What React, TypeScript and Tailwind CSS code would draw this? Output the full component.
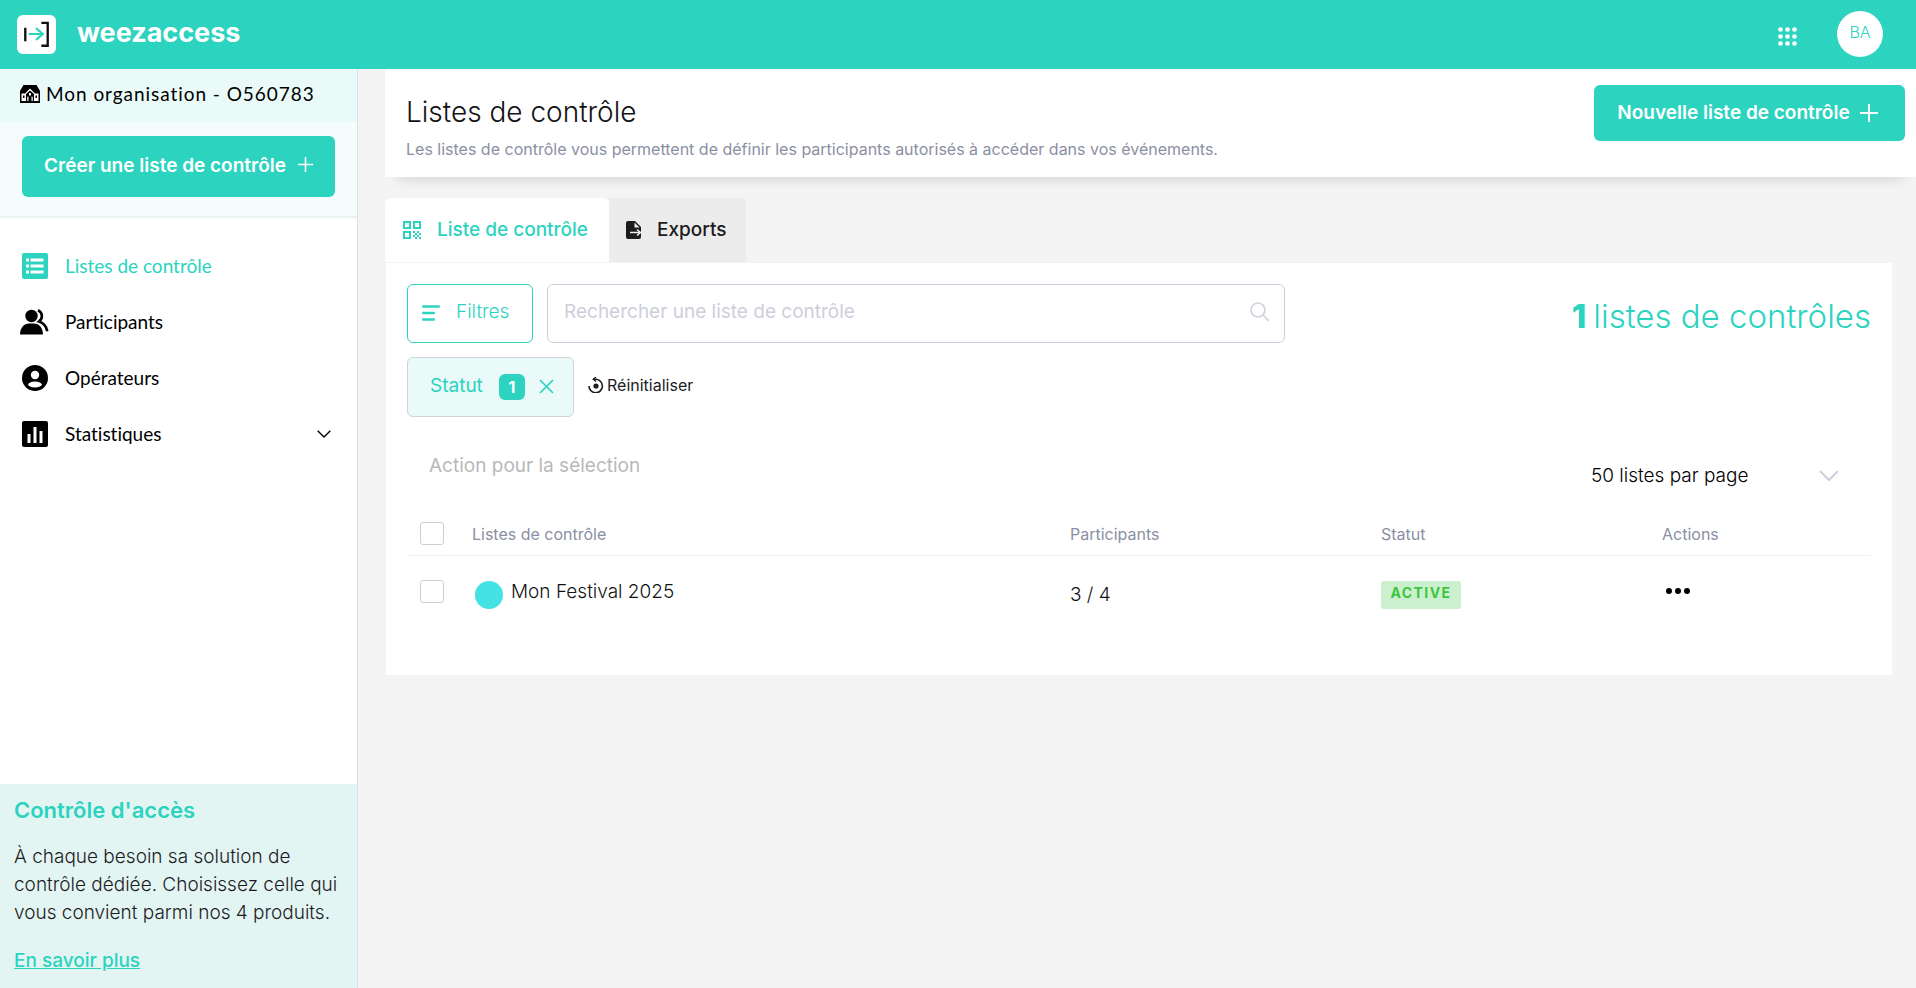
import { type ReactNode, useState } from "react";

type IconProps = { className?: string };

function LogoIcon({ className }: IconProps) {
  return (
    <svg viewBox="0 0 40 40" className={className} fill="none" aria-hidden="true">
      <path d="M8.500 13v14M25 8h6.500v23.500H25" stroke="#111" strokeWidth="2.400" />
      <path d="M12 19.500h14.500M19.500 13.500l7 6-7 6" stroke="#2cd3bf" strokeWidth="2.200" />
    </svg>
  );
}

function HomeIcon({ className }: IconProps) {
  return (
    <svg viewBox="0 0 20 18" className={className} aria-hidden="true">
      <path d="M3.500 0h13L20 6V18H0V6z" fill="#000" />
      <path d="M1.500 8.500H5L10 3.500l5 5h3.500v7.500H1.500z" fill="#fff" />
      <path d="M6 16V9l4-3.500L14 9v7h-1.500v-4h-5v4z" fill="#000" />
      <path d="M3 10.500h1.500V13H3zM15.500 10.500H17V13h-1.500z" fill="#000" />
      <path d="M9 8h2v2.500H9zM7.500 11.500h1V16h-1zM11.500 11.500h1V16h-1z" fill="#fff" />
      <path d="M8.500 12h3v5h-3z" fill="#000" />
    </svg>
  );
}

function ListIcon({ className }: IconProps) {
  return (
    <svg viewBox="0 0 26 26" className={className} aria-hidden="true">
      <rect width="26" height="26" rx="2" fill="currentColor" />
      <path
        d="M4 5.500h3v3H4zM8.500 5.500h13v3h-13zM4 11.500h3v3H4zM8.500 11.500h13v3h-13zM4 17.500h3v3H4zM8.500 17.500h13v3h-13z"
        fill="#fff"
      />
    </svg>
  );
}

function PeopleIcon({ className }: IconProps) {
  return (
    <svg viewBox="0 0 29 26" className={className} aria-hidden="true">
      <circle cx="11.500" cy="7" r="6.200" fill="currentColor" />
      <path d="M0 25.500c0-6.500 4-11 9-11h5c5 0 9 4.500 9 11z" fill="currentColor" />
      <path
        d="M18 1.200c5 2.300 5 8.300 1 11.300 4.500 1.500 7.500 5 8.300 9.800"
        fill="none"
        stroke="currentColor"
        strokeWidth="2.600"
      />
    </svg>
  );
}

function AccountIcon({ className }: IconProps) {
  return (
    <svg viewBox="0 0 26 26" className={className} aria-hidden="true">
      <circle cx="13" cy="13" r="13" fill="currentColor" />
      <circle cx="13" cy="10" r="4.200" fill="#fff" />
      <ellipse cx="13" cy="19.500" rx="6.800" ry="3" fill="#fff" />
    </svg>
  );
}

function StatsIcon({ className }: IconProps) {
  return (
    <svg viewBox="0 0 26 26" className={className} aria-hidden="true">
      <rect width="26" height="26" rx="2" fill="currentColor" />
      <path d="M5.500 13h3v9h-3zM11.500 6h3v16h-3zM17.500 10h3v12h-3z" fill="#fff" />
    </svg>
  );
}

function QrIcon({ className }: IconProps) {
  return (
    <svg viewBox="0 0 18 18" className={className} aria-hidden="true">
      <path
        d="M1 1h6v6H1zM11 1h6v6h-6zM1 11h6v6H1z"
        fill="none"
        stroke="currentColor"
        strokeWidth="2"
      />
      <path
        d="M10 10h2v2h-2zM14 10h2v2h-2zM12 12h2v2h-2zM16 12h2v2h-2zM10 14h2v2h-2zM14 14h2v2h-2zM12 16h2v2h-2zM16 16h2v2h-2z"
        fill="currentColor"
      />
    </svg>
  );
}

function ExportIcon({ className }: IconProps) {
  return (
    <svg viewBox="0 0 15 18" className={className} aria-hidden="true">
      <path
        d="M2 0h7l6 6v10a2 2 0 0 1-2 2H2a2 2 0 0 1-2-2V2a2 2 0 0 1 2-2z"
        fill="#1c1c1e"
      />
      <path d="M8.500 1.500v5h5z" fill="#ededed" />
      <path d="M4 11.500h10M11 8.500l3.500 3-3.500 3" fill="none" stroke="#ededed" strokeWidth="1.500" />
    </svg>
  );
}

function PlusIcon({ className }: IconProps) {
  return (
    <svg viewBox="0 0 16 16" className={className} aria-hidden="true">
      <path d="M8 0v16M0 8h16" stroke="currentColor" strokeWidth="1.700" />
    </svg>
  );
}

function FilterIcon({ className }: IconProps) {
  return (
    <svg viewBox="0 0 18 16" className={className} aria-hidden="true">
      <path
        d="M1.200 1.500h15.600M1.200 8h10.600M1.200 14.500h10.600"
        stroke="currentColor"
        strokeWidth="2.400"
        strokeLinecap="round"
      />
    </svg>
  );
}

function ResetIcon({ className }: IconProps) {
  return (
    <svg viewBox="0 0 16 16" className={className} fill="none" aria-hidden="true">
      <path d="M1 9a6.700 6.700 0 1 0 7-6.700H5.500" stroke="#1c1c1e" strokeWidth="1.600" />
      <path d="M8 0 5.200 2.300 8 4.600" stroke="#1c1c1e" strokeWidth="1.300" />
      <circle cx="8" cy="9" r="2.600" fill="#1c1c1e" />
    </svg>
  );
}

function ChevronIcon({ className }: IconProps) {
  return (
    <svg viewBox="0 0 20 12" className={className} fill="none" aria-hidden="true">
      <path d="m1 1 9 9 9-9" stroke="currentColor" strokeWidth="2" />
    </svg>
  );
}

type NavItem = {
  label: string;
  icon: ReactNode;
  active?: boolean;
  expandable?: boolean;
};

const navItems: NavItem[] = [
  { label: "Listes de contrôle", icon: <ListIcon className="size-[26px]" />, active: true },
  { label: "Participants", icon: <PeopleIcon className="h-[26px] w-[29px]" /> },
  { label: "Opérateurs", icon: <AccountIcon className="size-[26px]" /> },
  { label: "Statistiques", icon: <StatsIcon className="size-[26px]" />, expandable: true },
];

function TopBar() {
  return (
    <header className="flex h-[69px] shrink-0 items-center bg-[#2cd3bf] pr-[33px] pb-px pl-[17px] text-white">
      <a href="#" className="flex items-center gap-[21px]">
        <span className="flex size-[39px] items-center justify-center rounded-md bg-white">
          <LogoIcon className="size-[39px]" />
        </span>
        <span className="pb-[3px] text-[27px] leading-8 font-bold">weezaccess</span>
      </a>
      <button type="button" aria-label="Applications" className="mt-1 mr-10 ml-auto">
        <svg viewBox="0 0 19 19" className="size-[19px]" fill="#fff" aria-hidden="true">
          {[2.5, 9.5, 16.5].map((y) =>
            [2.5, 9.5, 16.5].map((x) => <circle key={`${x}-${y}`} cx={x} cy={y} r="2.3" />),
          )}
        </svg>
      </button>
      <button
        type="button"
        className="flex size-[46px] items-center justify-center rounded-full bg-white pb-1 text-base font-light text-[#2cd3bf]">
        BA
      </button>
    </header>
  );
}

function Sidebar() {
  return (
    <aside className="flex w-[358px] shrink-0 flex-col border-r border-[#dcdfeb] bg-white">
      <div className="flex h-[53px] items-center gap-[6px] bg-[#e9faf9] pb-[3px] pl-5 font-['Lato',sans-serif] text-[19px] tracking-wider text-black">
        <HomeIcon className="h-[18px] w-5" />
        Mon organisation - O560783
      </div>
      <div className="border-b border-[#e3eeee] bg-[#f4fdfc] px-[22px] pt-[14px] pb-[19px] shadow-[0_2px_0_#f4f9fb]">
        <button
          type="button"
          className="flex h-[61px] w-full items-center justify-center gap-3 rounded-md bg-[#2cd3bf] text-[19px] font-semibold whitespace-nowrap text-white">
          Créer une liste de contrôle
          <PlusIcon className="mb-1 size-[15px]" />
        </button>
      </div>
      <nav className="mt-[21px] font-['Lato',sans-serif] text-[19px] [font-variant-ligatures:none]">
        {navItems.map((item) => (
          <a
            key={item.label}
            href="#"
            className={`flex h-14 items-center pr-[26px] pl-5 ${item.active ? "text-[#2cd3bf]" : "text-black"}`}>
            <span className="flex w-[29px] justify-center">{item.icon}</span>
            <span className="ml-4">{item.label}</span>
            {item.expandable && <ChevronIcon className="ml-auto w-[14px]" />}
          </a>
        ))}
      </nav>
      <section className="mt-auto bg-[#e3f5f3] px-[14px] pt-3 pb-[13px]">
        <h2 className="text-[22px] leading-7 font-semibold text-[#2cd3bf]">Contrôle d'accès</h2>
        <p className="mt-[19px] text-[19px] leading-7 font-light text-[#1c1c1e]">
          À chaque besoin sa solution de contrôle dédiée. Choisissez celle qui vous convient parmi
          nos 4 produits.
        </p>
        <a
          href="#"
          className="mt-5 block text-[19px] leading-7 font-medium text-[#2cd3bf] underline">
          En savoir plus
        </a>
      </section>
    </aside>
  );
}

function PageHeader() {
  return (
    <div className="flex h-[108px] items-start bg-white pr-[11px] pl-[21px] shadow-[0_14px_12px_-12px_rgba(0,0,0,0.14)]">
      <div className="pt-[25px]">
        <h1 className="text-[28px] leading-9 font-light text-[#131316]">Listes de contrôle</h1>
        <p className="mt-[7px] text-base leading-6 text-[#8b8fa3]">
          Les listes de contrôle vous permettent de définir les participants autorisés à accéder
          dans vos événements.
        </p>
      </div>
      <button
        type="button"
        className="mt-4 ml-auto flex h-14 w-[311px] items-center justify-center gap-[10px] rounded-md bg-[#2cd3bf] pr-1 text-[19px] font-semibold whitespace-nowrap text-white">
        Nouvelle liste de contrôle
        <PlusIcon className="size-[18px]" />
      </button>
    </div>
  );
}

function Checkbox({ label }: { label: string }) {
  return (
    <input
      type="checkbox"
      aria-label={label}
      className="block h-[23px] w-6 appearance-none rounded-[3px] border border-[#cdcedb] bg-white checked:bg-[#2cd3bf]"
    />
  );
}

function ListTable() {
  return (
    <table className="mt-[13px] w-full table-fixed text-left">
      <thead>
        <tr className="h-[42px] border-b border-[#f2f2f4] text-base text-[#8b8fa3]">
          <th className="w-[51px] pl-[13px]">
            <Checkbox label="Tout sélectionner" />
          </th>
          <th className="w-[598px] pl-[14px] font-normal">Listes de contrôle</th>
          <th className="w-[311px] pl-[14px] font-normal">Participants</th>
          <th className="w-[281px] pl-[14px] font-normal">Statut</th>
          <th className="w-[223px] pl-[14px] font-normal">Actions</th>
        </tr>
      </thead>
      <tbody>
        <tr className="h-[78px] align-top text-[19px] font-light text-[#131316]">
          <td className="pt-6 pl-[13px]">
            <Checkbox label="Sélectionner Mon Festival 2025" />
          </td>
          <td className="pt-6 pl-[17px] leading-6">
            <div className="flex gap-2">
              <span className="mt-px size-7 rounded-full bg-[#44e2e4]" />
              Mon Festival 2025
            </div>
          </td>
          <td className="pt-6 pl-[14px] leading-[30px]">3 / 4</td>
          <td className="pt-[25px] pl-[14px]">
            <span className="block w-20 rounded-[3px] bg-[#cbf0cd] pb-1 text-center text-sm leading-6 font-bold tracking-widest text-[#3cc63f]">
              ACTIVE
            </span>
          </td>
          <td className="pt-[23px] pl-[18px]">
            <button type="button" aria-label="Actions" className="flex h-6 items-center gap-[3px]">
              <span className="size-[6px] rounded-full bg-black" />
              <span className="size-[6px] rounded-full bg-black" />
              <span className="size-[6px] rounded-full bg-black" />
            </button>
          </td>
        </tr>
      </tbody>
    </table>
  );
}

function ListPanel() {
  const [search, setSearch] = useState("");

  return (
    <section className="mr-6 ml-px border-t border-[#eef4f8] bg-white pt-[21px] pr-[21px] pb-[42px] pl-[21px]">
      <div className="flex items-center">
        <button
          type="button"
          className="flex h-[59px] w-[126px] items-center gap-4 rounded-md border border-[#2cd3bf] pb-[2px] pl-[14px] text-[19px] font-light text-[#2cd3bf]">
          <FilterIcon className="h-4 w-[18px]" />
          Filtres
        </button>
        <label className="mr-10 ml-[14px] flex h-[59px] max-w-[738px] flex-1 items-center rounded-md border border-[#cdcedb] pr-[14px] pl-4">
          <input
            type="text"
            aria-label="Rechercher une liste de contrôle"
            value={search}
            onChange={(event) => setSearch(event.target.value)}
            placeholder="Rechercher une liste de contrôle"
            className="min-w-0 flex-1 pb-[2px] text-[19px] outline-none placeholder:text-[#cdcedb]"
          />
          <svg viewBox="0 0 20 20" className="mb-1 size-5 text-[#d0d4de]" fill="none" aria-hidden="true">
            <circle cx="8" cy="8" r="7" stroke="currentColor" strokeWidth="1.700" />
            <path d="m13 13 6 6" stroke="currentColor" strokeWidth="1.700" />
          </svg>
        </label>
        <p className="mt-1 ml-auto flex gap-[7px] text-[33px] leading-10 font-light whitespace-nowrap text-[#2cd3bf]">
          <strong className="font-extrabold">1</strong>
          <span>listes de contrôles</span>
        </p>
      </div>

      <div className="mt-[14px] flex items-center">
        <div className="flex h-[60px] w-[167px] items-center rounded-md border border-[#cdd3db] bg-[#e9faf8] pl-[22px] text-[19px] text-[#2cd3bf]">
          <span className="pb-[2px]">Statut</span>
          <span className="ml-4 flex size-[26px] items-center justify-center rounded-md bg-[#2cd3bf] text-base font-bold text-white">
            1
          </span>
          <button type="button" aria-label="Retirer le filtre" className="ml-[14px]">
            <svg viewBox="0 0 15 15" className="mb-px size-[15px]" aria-hidden="true">
              <path d="m1 1 13 13M14 1 1 14" stroke="currentColor" strokeWidth="1.700" />
            </svg>
          </button>
        </div>
        <button
          type="button"
          className="ml-[14px] flex items-center gap-[3px] pb-1 text-base text-[#1c1c1e]">
          <ResetIcon className="size-4" />
          Réinitialiser
        </button>
      </div>

      <div className="mt-8 flex items-start justify-between">
        <button type="button" disabled className="pt-px pl-[22px] text-[19px] leading-8 text-[#b9b9b9]">
          Action pour la sélection
        </button>
        <div className="relative mt-[3px] mr-8 flex items-center">
          <select
            aria-label="Listes par page"
            className="h-12 w-[248px] appearance-none bg-transparent text-[19px] font-light text-black">
            <option>50 listes par page</option>
          </select>
          <ChevronIcon className="pointer-events-none absolute right-0 w-5 text-[#cdcedb]" />
        </div>
      </div>

      <ListTable />
    </section>
  );
}

export default function App() {
  return (
    <div className="flex min-h-screen flex-col bg-[#f4f4f4] font-['Inter',sans-serif]">
      <TopBar />
      <div className="flex flex-1">
        <Sidebar />
        <main className="min-w-0 flex-1 pl-[27px]">
          <PageHeader />
          <div role="tablist" className="relative mt-[21px] flex h-16">
            <button
              type="button"
              role="tab"
              aria-selected="true"
              className="flex w-56 items-center gap-4 rounded-t-md bg-white pl-[18px] text-[19px] font-medium whitespace-nowrap text-[#2cd3bf]">
              <QrIcon className="size-[18px]" />
              Liste de contrôle
            </button>
            <button
              type="button"
              role="tab"
              aria-selected="false"
              className="flex w-[137px] items-center gap-4 rounded-tr-md bg-[#ececec] pl-[17px] text-[19px] font-medium text-[#1c1c1e]">
              <ExportIcon className="h-[18px] w-[15px]" />
              Exports
            </button>
          </div>
          <ListPanel />
        </main>
      </div>
    </div>
  );
}
